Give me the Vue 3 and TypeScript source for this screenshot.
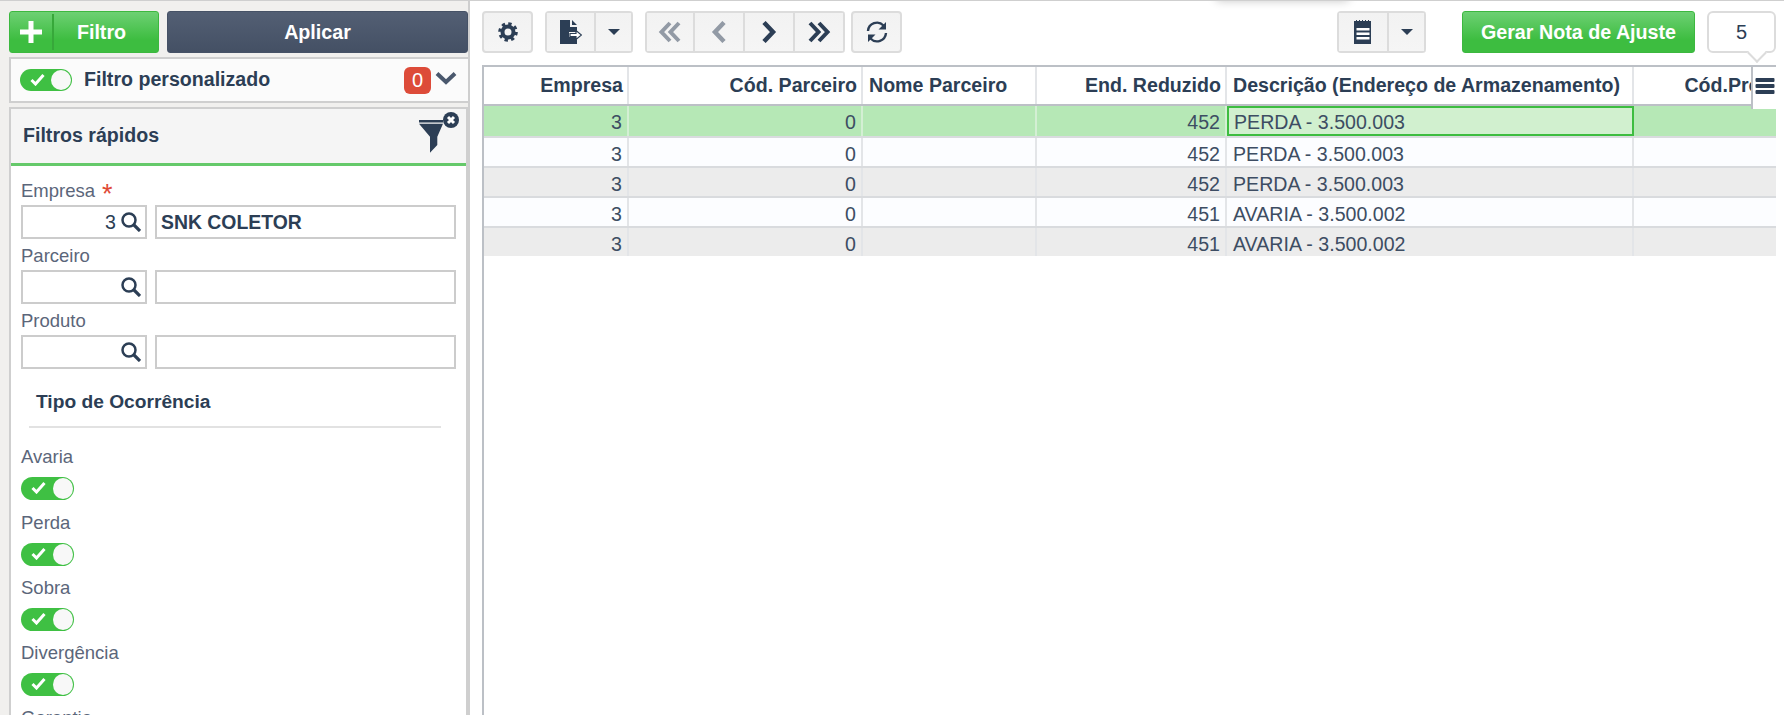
<script setup lang="ts">
interface Row { emp: string; par: string; end: string; desc: string }
const rows: Row[] = [
  { emp: '3', par: '0', end: '452', desc: 'PERDA - 3.500.003' },
  { emp: '3', par: '0', end: '452', desc: 'PERDA - 3.500.003' },
  { emp: '3', par: '0', end: '452', desc: 'PERDA - 3.500.003' },
  { emp: '3', par: '0', end: '451', desc: 'AVARIA - 3.500.002' },
  { emp: '3', par: '0', end: '451', desc: 'AVARIA - 3.500.002' },
]
const ocorrencias = ['Avaria', 'Perda', 'Sobra', 'Divergência']
const lookups = [
  { label: 'Empresa', req: true, code: '3', name: 'SNK COLETOR' },
  { label: 'Parceiro', req: false, code: '', name: '' },
  { label: 'Produto', req: false, code: '', name: '' },
]
</script>

<template>
  <div class="page">
    <div class="top-glow"></div>
    <aside class="side">
      <div class="side-actions">
        <button class="btn green filtro">
          <span class="plus">
            <svg width="22" height="22" viewBox="0 0 22 22"><path d="M8.500 0h5v8.500h8.500v5h-8.500v8.500h-5v-8.500h-8.500v-5h8.500z" fill="#fff" /></svg>
          </span>
          <span class="filtro-txt">Filtro</span>
        </button>
        <button class="btn dark aplicar">Aplicar</button>
      </div>

      <div class="custom">
        <span class="toggle first">
          <svg class="check" width="15" height="13" viewBox="0 0 15 13"><path d="M1.500 7l4 4 8-9" fill="none" stroke="#fff" stroke-width="3" /></svg>
          <span class="knob"></span>
        </span>
        <span class="custom-title">Filtro personalizado</span>
        <span class="badge">0</span>
        <svg class="chev" width="22" height="14" viewBox="0 0 22 14"><path d="M2 2.500l9 8.500 9-8.500" fill="none" stroke="#4a586d" stroke-width="4" /></svg>
      </div>

      <section class="quick">
        <header class="quick-head">
          <span class="quick-title">Filtros rápidos</span>
          <svg class="funnel" width="44" height="44" viewBox="0 0 44 44">
            <path d="M2 9h24v2.500H2zM2 12.700h24L20.300 25.700V34L13 41.700V25.700z" fill="#2c3e55" />
            <circle cx="34" cy="9" r="8" fill="#2c3e55" />
            <path d="M31 6l6 6m0-6l-6 6" stroke="#fff" stroke-width="3" />
          </svg>
        </header>
        <div class="quick-body">
          <div v-for="f in lookups" :key="f.label" class="field">
            <label class="lbl">{{ f.label }}<span v-if="f.req" class="req">*</span></label>
            <div class="inputs">
              <div class="inp code">
                <span class="code-val">{{ f.code }}</span>
                <svg width="20" height="20" viewBox="0 0 20 20"><circle cx="8" cy="8" r="6.500" fill="none" stroke="#2c3e55" stroke-width="2.500" /><path d="M12.500 12.500l6.500 6.500" stroke="#2c3e55" stroke-width="3.200" /></svg>
              </div>
              <div class="inp name">{{ f.name }}</div>
            </div>
          </div>

          <h3 class="group">Tipo de Ocorrência</h3>

          <div class="occ-list">
            <div v-for="o in ocorrencias" :key="o" class="occ">
              <div class="lbl">{{ o }}</div>
              <span class="toggle">
                <svg class="check" width="15" height="13" viewBox="0 0 15 13"><path d="M1.500 7l4 4 8-9" fill="none" stroke="#fff" stroke-width="3" /></svg>
                <span class="knob"></span>
              </span>
            </div>
            <div class="lbl last">Garantia</div>
          </div>
        </div>
      </section>
    </aside>

    <main class="main">
      <div class="toolbar">
        <button class="tb single">
          <svg width="22" height="22" viewBox="0 0 22 22">
            <circle cx="11" cy="11" r="8.200" fill="none" stroke="#2c3e55" stroke-width="3.200" stroke-dasharray="3.300 3.140" />
            <circle cx="11" cy="11" r="5.500" fill="none" stroke="#2c3e55" stroke-width="4" />
          </svg>
        </button>
        <div class="tb-group doc">
          <button class="tb seg w51">
            <svg width="22" height="24" viewBox="0 0 22 24">
              <path d="M0 0h10v7h7v5H9v5h8v7H0zM12 0l5 5h-5z" fill="#2c3e55" />
              <path d="M10 13.500h6v-3l5.500 4.500-5.500 4.500v-3h-6z" fill="#fff" stroke="#2c3e55" stroke-width="1.200" />
            </svg>
          </button>
          <button class="tb seg w37"><span class="caret"></span></button>
        </div>
        <div class="tb-group nav">
          <button class="tb seg navb">
            <svg width="24" height="22" viewBox="0 0 24 22"><path d="M12 2L3.500 11 12 20M21 2l-8.500 9 8.500 9" fill="none" stroke="#929aa5" stroke-width="4" /></svg>
          </button>
          <button class="tb seg navb">
            <svg width="16" height="22" viewBox="0 0 16 22"><path d="M13 1.500L4 11l9 9.500" fill="none" stroke="#929aa5" stroke-width="4.500" /></svg>
          </button>
          <button class="tb seg navb">
            <svg width="16" height="22" viewBox="0 0 16 22"><path d="M3 1.500l9 9.500-9 9.500" fill="none" stroke="#2c3e55" stroke-width="4.500" /></svg>
          </button>
          <button class="tb seg navb">
            <svg width="24" height="22" viewBox="0 0 24 22"><path d="M3 2l8.500 9L3 20M12 2l8.500 9-8.500 9" fill="none" stroke="#2c3e55" stroke-width="4" /></svg>
          </button>
        </div>
        <button class="tb single refresh">
          <svg width="24" height="24" viewBox="0 0 24 24">
            <path d="M3 11a9 9 0 0 1 15.500-5.500M21 13a9 9 0 0 1-15.500 5.500" fill="none" stroke="#2c3e55" stroke-width="2.400" />
            <path d="M21 2v7.500h-7.500zM3 22v-7.500h7.500z" fill="#2c3e55" />
          </svg>
        </button>
        <div class="spacer"></div>
        <div class="tb-group list">
          <button class="tb seg w52">
            <svg width="18" height="24" viewBox="0 0 18 24">
              <path d="M0 1h2v-1h1v1h2v-1h1v1h2v-1h1v1h2v-1h1v1h2v-1h1v1h2v23H0z" fill="#2c3e55" />
              <path d="M2.500 8h13v2.500h-13zM2.500 12.500h13V15h-13zM2.500 17h13v2.500h-13z" fill="#fff" />
            </svg>
          </button>
          <button class="tb seg w37"><span class="caret"></span></button>
        </div>
        <button class="btn green gerar">Gerar Nota de Ajuste</button>
        <div class="count">5<span class="count-tip"></span></div>
      </div>

      <div class="table">
        <div class="tgrid">
          <div class="row head">
            <div class="c r">Empresa</div>
            <div class="c r">Cód. Parceiro</div>
            <div class="c">Nome Parceiro</div>
            <div class="c r">End. Reduzido</div>
            <div class="c">Descrição (Endereço de Armazenamento)</div>
            <div class="c r">Cód.Produto</div>
          </div>
          <div v-for="(row, i) in rows" :key="i" class="row body" :class="{ sel: i === 0, odd: i === 2 || i === 4 }">
            <div class="c r">{{ row.emp }}</div>
            <div class="c r">{{ row.par }}</div>
            <div class="c"></div>
            <div class="c r">{{ row.end }}</div>
            <div class="c" :class="{ active: i === 0 }">{{ row.desc }}</div>
            <div class="c r"></div>
          </div>
        </div>
        <div class="col-menu">
          <svg width="20" height="18" viewBox="0 0 20 18"><path d="M1.500 1h17a1 1 0 0 1 1 1v2a1 1 0 0 1-1 1h-17a1 1 0 0 1-1-1V2a1 1 0 0 1 1-1zM1.500 7h17a1 1 0 0 1 1 1v2a1 1 0 0 1-1 1h-17a1 1 0 0 1-1-1V8a1 1 0 0 1 1-1zM1.500 13h17a1 1 0 0 1 1 1v2a1 1 0 0 1-1 1h-17a1 1 0 0 1-1-1v-2a1 1 0 0 1 1-1z" fill="#2c3e55" /></svg>
        </div>
      </div>
    </main>
  </div>
</template>

<style scoped>
.page {
  position: relative;
  display: flex;
  width: 1784px;
  height: 715px;
  overflow: hidden;
  box-sizing: border-box;
  border-top: 1px solid #cfcfcf;
  background: #fff;
  font-family: "Liberation Sans", Arial, sans-serif;
  color: #2c3e55;
}
.top-glow {
  position: absolute;
  left: 1215px;
  top: -14px;
  width: 135px;
  height: 12px;
  border-radius: 8px;
  box-shadow: 0 2px 10px rgba(0, 0, 0, 0.22);
}
button {
  font-family: inherit;
  margin: 0;
  padding: 0;
  cursor: pointer;
}
.side {
  box-sizing: border-box;
  width: 470px;
  flex: none;
  padding: 10px 0 0 9px;
  background: #f1f0ee;
  border-right: 2px solid #cfcfcf;
  display: flex;
  flex-direction: column;
}
.side-actions {
  display: flex;
  gap: 8px;
  height: 42px;
}
.btn {
  border-radius: 3px;
  color: #fff;
  font-weight: 700;
  font-size: 19.700px;
}
.green {
  background: linear-gradient(#6dd073, #3dbd40 70%);
  border: 1px solid #3cb83f;
}
.dark {
  background: linear-gradient(#535f74, #445064);
  border: 1px solid #465266;
}
.filtro {
  width: 150px;
  display: flex;
  align-items: center;
  padding: 0;
}
.plus {
  width: 42px;
  height: 36px;
  display: flex;
  align-items: center;
  justify-content: center;
  border-right: 2px solid #37a83a;
}
.filtro-txt {
  flex: 1;
  text-align: center;
  padding-right: 9px;
}
.aplicar {
  flex: 1;
}
.custom {
  box-sizing: border-box;
  height: 46px;
  margin-top: 4px;
  display: flex;
  align-items: center;
  background: #fbfbfb;
  border: solid #cfcfcf;
  border-width: 2px 0 2px 2px;
  padding: 0 11px 0 9px;
}
.custom-title {
  font-weight: 700;
  font-size: 19.600px;
  margin-left: 12px;
  padding-bottom: 2px;
  flex: 1;
}
.badge {
  width: 27px;
  height: 27px;
  border-radius: 6px;
  background: #dd4b39;
  color: #fff;
  font-size: 20px;
  text-align: center;
  line-height: 27px;
}
.chev {
  margin-left: 4px;
  margin-top: -4px;
}
.quick {
  margin-top: 4px;
  flex: 1;
  min-height: 0;
  border: solid #cfcfcf;
  border-width: 2px 2px 0 2px;
  background: #fff;
  display: flex;
  flex-direction: column;
}
.quick-head {
  position: relative;
  height: 54px;
  flex: none;
  display: flex;
  align-items: center;
  padding-left: 12px;
  background: #f5f5f5;
  border-bottom: 3px solid #65c96a;
}
.quick-title {
  font-weight: 700;
  font-size: 19.600px;
  padding-bottom: 2px;
}
.funnel {
  position: absolute;
  right: 5px;
  top: 2px;
}
.quick-body {
  padding: 8px 10px 0;
}
.field {
  height: 65px;
}
.lbl {
  display: block;
  height: 31px;
  line-height: 33px;
  font-size: 18.500px;
  color: #5b667a;
}
.req {
  color: #e04a36;
  font-size: 27px;
  line-height: 20px;
  margin-left: 7px;
  vertical-align: -6px;
}
.inputs {
  display: flex;
  gap: 8px;
}
.inp {
  box-sizing: border-box;
  height: 34px;
  border: 2px solid #cccccc;
  display: flex;
  align-items: center;
  background: #fff;
  font-size: 19.400px;
}
.code {
  width: 126px;
  justify-content: flex-end;
  padding-right: 4px;
  gap: 5px;
}
.code-val {
  font-size: 19.600px;
}
.name {
  width: 301px;
  padding-left: 4px;
  font-weight: 700;
}
.group {
  margin: 20px 15px 0 8px;
  height: 39px;
  box-sizing: border-box;
  padding-left: 7px;
  font-size: 19.200px;
  font-weight: 700;
  line-height: 26px;
  border-bottom: 2px solid #e2e2e2;
}
.occ-list {
  padding-top: 14px;
}
.occ {
  height: 65px;
}
.occ:first-child {
  height: 66px;
}
.occ .lbl {
  height: 30px;
  line-height: 30px;
}
.lbl.last {
  line-height: 30px;
}
.toggle {
  position: relative;
  display: block;
  width: 53px;
  height: 23px;
  margin-top: 5px;
  border-radius: 12px;
  background: #3fc043;
}
.toggle.first {
  flex: none;
  width: 52px;
  height: 22px;
  margin-top: 0;
}
.check {
  position: absolute;
  left: 10px;
  top: 4px;
}
.knob {
  position: absolute;
  right: 1px;
  top: 1px;
  width: 20px;
  height: 21px;
  border-radius: 50%;
  background: #f8f8f8;
}
.toggle.first .knob {
  height: 20px;
}
.main {
  flex: 1;
  min-width: 0;
  padding: 0 8px 0 12px;
  display: flex;
  flex-direction: column;
}
.toolbar {
  display: flex;
  align-items: flex-start;
  padding-top: 10px;
  height: 54px;
  flex: none;
}
.tb {
  box-sizing: border-box;
  height: 42px;
  display: flex;
  align-items: center;
  justify-content: center;
  background: linear-gradient(#f2f2f2, #f5f5f5);
  border: 2px solid #dcdcdc;
}
.single {
  width: 51px;
  border-radius: 4px;
}
.tb-group {
  display: flex;
  border-radius: 4px;
  overflow: hidden;
}
.seg {
  border-radius: 0;
}
.seg + .seg {
  border-left: 0;
}
.doc {
  margin-left: 12px;
}
.nav {
  margin-left: 12px;
}
.refresh {
  margin-left: 6px;
}
.w51 {
  width: 51px;
}
.w52 {
  width: 52px;
}
.w37 {
  width: 37px;
}
.navb {
  width: 50px;
}
.spacer {
  flex: 1;
}
.caret {
  width: 0;
  height: 0;
  border: 6px solid transparent;
  border-top: 6px solid #2c3e55;
  border-bottom: 0;
}
.gerar {
  width: 233px;
  height: 42px;
  margin-left: 36px;
}
.count {
  position: relative;
  box-sizing: border-box;
  width: 69px;
  height: 42px;
  margin-left: 12px;
  border: 2px solid #dcdcdc;
  border-radius: 6px;
  text-align: center;
  line-height: 38px;
  font-size: 20px;
  background: #fff;
}
.count-tip {
  position: absolute;
  right: 10px;
  bottom: -9px;
  width: 12px;
  height: 12px;
  background: #fff;
  border: solid #dcdcdc;
  border-width: 0 2px 2px 0;
  transform: rotate(45deg);
}
.table {
  position: relative;
  flex: 1;
  min-height: 0;
  overflow: hidden;
  border-top: 2px solid #bcc0c6;
  border-left: 2px solid #bcc0c6;
}
.tgrid {
  width: 1325px;
}
.row {
  display: grid;
  grid-template-columns: 145px 234px 174px 190px 407px 175px;
}
.head {
  box-sizing: border-box;
  height: 39px;
  border-bottom: 2px solid #bcc0c6;
  font-weight: 700;
  font-size: 19.600px;
  line-height: 37px;
}
.head .c {
  padding: 0 4px 0 6px;
}
.body {
  height: 30px;
  box-sizing: border-box;
  border-bottom: 2px solid #d9dbde;
  line-height: 32px;
  font-size: 19.600px;
  color: #3d4d63;
  background: #fcfdff;
}
.row.body.sel {
  height: 32px;
}
.row.body:last-child {
  height: 28px;
  border-bottom: 0;
}
.odd {
  background: #ececec;
}
.sel {
  background: #b6e8b6;
}
.c {
  box-sizing: border-box;
  padding: 0 5px 0 6px;
  white-space: nowrap;
  overflow: hidden;
  border-right: 2px solid #e3e5e8;
}
.sel .c {
  border-right-color: #d4efd4;
}
.r {
  text-align: right;
}
.c.active {
  background: #d1f0cf;
  border: 2px solid #3dbd40;
  line-height: 28px;
  padding: 0 4px 0 5px;
  height: 30px;
}
.col-menu {
  position: absolute;
  right: 0;
  top: 0;
  box-sizing: border-box;
  width: 25px;
  height: 42px;
  background: #fff;
  border-left: 2px solid #bcc0c6;
  display: flex;
  justify-content: center;
  padding-top: 10px;
}
</style>

<style>
html, body { margin: 0; background: #fff; }
</style>
